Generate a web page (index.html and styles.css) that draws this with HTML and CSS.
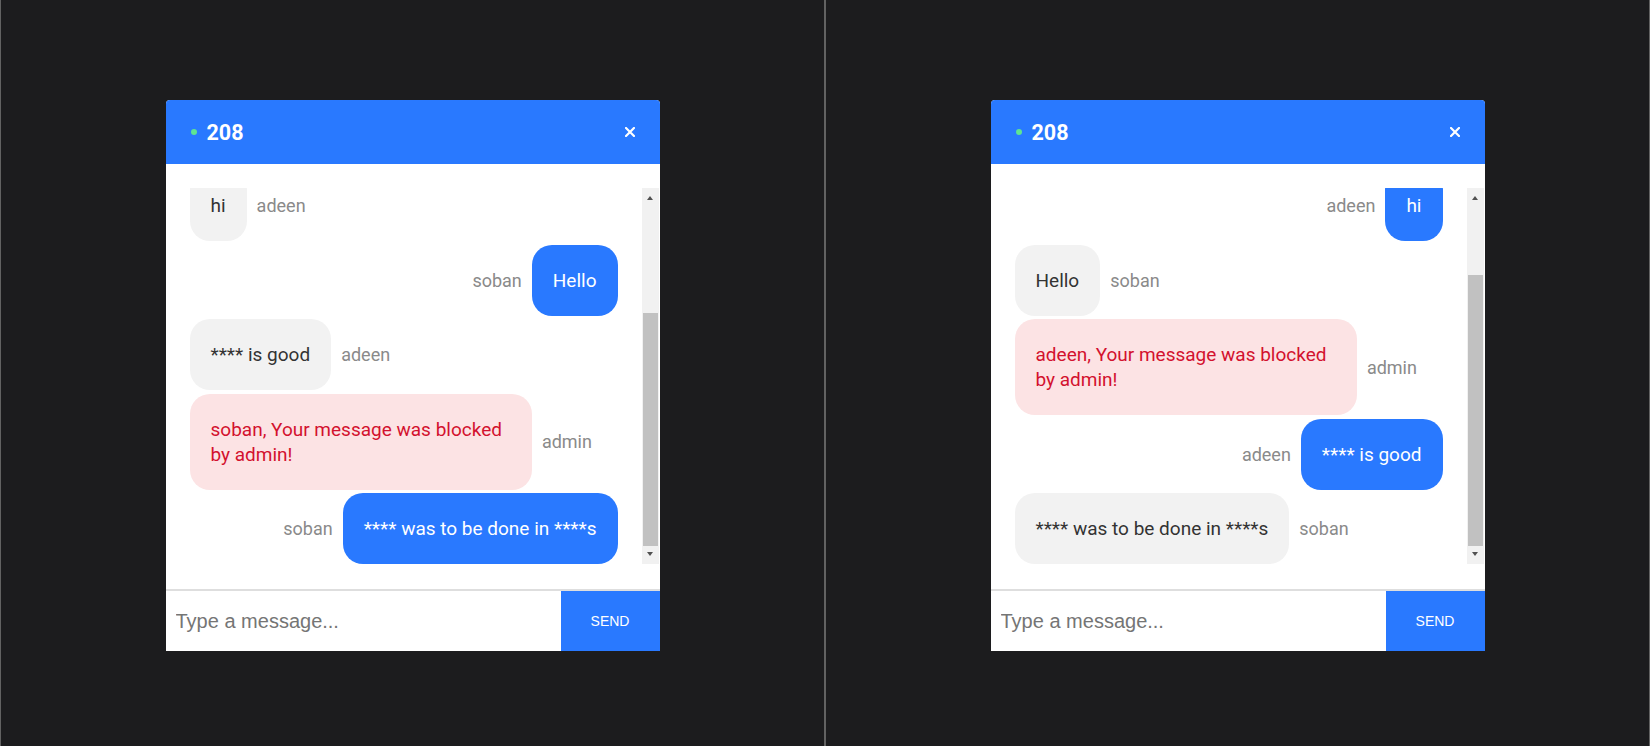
FILE: index.html
```html
<!DOCTYPE html>
<html lang="en">
<head>
<meta charset="utf-8">
<title>Chat 208</title>
<link rel="stylesheet" href="styles.css">
</head>
<body>
<div class="screen">
  <section class="pane">
    <div class="chat">
      <header class="chat-head">
        <span class="status-dot"></span>
        <span class="room">208</span>
        <button class="close" type="button" aria-label="Close">
          <svg width="10" height="10" viewBox="0 0 10 10"><path d="M1 1L9 9M9 1L1 9" stroke="#fff" stroke-width="2.2" stroke-linecap="square"/></svg>
        </button>
      </header>
      <div class="chat-body">
        <div class="messages">
          <div class="row other"><div class="bubble">hi</div><span class="author">adeen</span></div>
          <div class="row mine"><span class="author">soban</span><div class="bubble">Hello</div></div>
          <div class="row other"><div class="bubble">**** is good</div><span class="author">adeen</span></div>
          <div class="row other"><div class="bubble blocked">soban, Your message was blocked by admin!</div><span class="author">admin</span></div>
          <div class="row mine"><span class="author">soban</span><div class="bubble">**** was to be done in ****s</div></div>
        </div>
        <div class="scrollbar">
          <div class="sb-btn"><span class="arrow-up"></span></div>
          <div class="sb-track"><div class="sb-thumb" style="height:233px"></div></div>
          <div class="sb-btn"><span class="arrow-down"></span></div>
        </div>
      </div>
      <form class="composer">
        <input class="composer-input" type="text" placeholder="Type a message..." autofocus>
        <button class="send" type="button">Send</button>
      </form>
    </div>
  </section>
  <section class="pane">
    <div class="chat">
      <header class="chat-head">
        <span class="status-dot"></span>
        <span class="room">208</span>
        <button class="close" type="button" aria-label="Close">
          <svg width="10" height="10" viewBox="0 0 10 10"><path d="M1 1L9 9M9 1L1 9" stroke="#fff" stroke-width="2.2" stroke-linecap="square"/></svg>
        </button>
      </header>
      <div class="chat-body">
        <div class="messages">
          <div class="row mine"><span class="author">adeen</span><div class="bubble">hi</div></div>
          <div class="row other"><div class="bubble">Hello</div><span class="author">soban</span></div>
          <div class="row other"><div class="bubble blocked">adeen, Your message was blocked by admin!</div><span class="author">admin</span></div>
          <div class="row mine"><span class="author">adeen</span><div class="bubble">**** is good</div></div>
          <div class="row other"><div class="bubble">**** was to be done in ****s</div><span class="author">soban</span></div>
        </div>
        <div class="scrollbar">
          <div class="sb-btn"><span class="arrow-up"></span></div>
          <div class="sb-track"><div class="sb-thumb" style="height:271px"></div></div>
          <div class="sb-btn"><span class="arrow-down"></span></div>
        </div>
      </div>
      <form class="composer">
        <input class="composer-input" type="text" placeholder="Type a message...">
        <button class="send" type="button">Send</button>
      </form>
    </div>
  </section>
</div>
</body>
</html>
```
FILE: styles.css
```css
* { box-sizing: border-box; }

html, body {
  margin: 0;
  padding: 0;
  background: #1c1c1e;
}

.screen {
  display: flex;
  width: 1650px;
  height: 746px;
}

.pane {
  width: 825px;
  height: 746px;
  border-left: 1px solid #626262;
  border-right: 1px solid #626262;
  padding-top: 100px;
  display: flex;
  justify-content: center;
  align-items: flex-start;
}

.chat {
  width: 494px;
  height: 551px;
  background: #fff;
  border-radius: 4px 4px 0 0;
  overflow: hidden;
  display: flex;
  flex-direction: column;
  font-family: Roboto, "Liberation Sans", sans-serif;
}

.chat-head {
  height: 64px;
  flex: 0 0 64px;
  background: #2979ff;
  display: flex;
  align-items: center;
  padding: 0 25px 0 25px;
}

.status-dot {
  width: 6px;
  height: 6px;
  border-radius: 50%;
  background: #5ee592;
  margin-right: 10px;
}

.room {
  color: #fff;
  font-weight: 700;
  font-size: 21.5px;
  flex: 1;
}

.close {
  background: none;
  border: 0;
  padding: 0;
  width: 10px;
  height: 10px;
  display: flex;
  cursor: pointer;
}

.chat-body {
  display: flex;
  padding: 24px 1px 25px 24px;
  border-bottom: 2px solid #dedede;
  height: 427px;
  flex: 0 0 427px;
}

.messages {
  flex: 1;
  margin-right: 24px;
  overflow: hidden;
  display: flex;
  flex-direction: column;
  justify-content: flex-end;
  gap: 3.5px;
}

.row {
  display: flex;
  align-items: center;
  gap: 10px;
  flex-shrink: 0;
}

.row.mine { justify-content: flex-end; }

.bubble {
  max-width: 80%;
  padding: 23px 21px;
  border-radius: 20px;
  font-size: 19px;
  line-height: 25px;
  background: #f2f2f2;
  color: #333;
}

.row.mine .bubble {
  background: #2979ff;
  color: #fff;
}

.bubble.blocked {
  background: #fce3e4;
  color: #d3112e;
}

.author {
  font-size: 18px;
  color: #8a8a8a;
  white-space: nowrap;
}

.scrollbar {
  width: 17px;
  flex: 0 0 17px;
  background: #f1f1f1;
  display: flex;
  flex-direction: column;
}

.sb-btn {
  height: 17px;
  flex: 0 0 17px;
  display: flex;
  justify-content: center;
  align-items: center;
}

.arrow-up {
  width: 0;
  height: 0;
  border-left: 3.5px solid transparent;
  border-right: 3.5px solid transparent;
  border-bottom: 4px solid #505050;
  margin-top: 3px;
}

.arrow-down {
  width: 0;
  height: 0;
  border-left: 3.5px solid transparent;
  border-right: 3.5px solid transparent;
  border-top: 4px solid #505050;
  margin-bottom: 3px;
}

.sb-track {
  flex: 1;
  display: flex;
  flex-direction: column;
  justify-content: flex-end;
  padding: 0 1px 1px 1px;
}

.sb-thumb {
  background: #c1c1c1;
}

.composer {
  height: 60px;
  flex: 0 0 60px;
  display: flex;
  margin: 0;
}

.composer-input {
  flex: 1;
  min-width: 0;
  border: 0;
  outline: none;
  padding: 0 10px;
  font-family: "Liberation Sans", Arial, sans-serif;
  font-size: 20px;
  color: #333;
  background: #fff;
}

.composer-input::placeholder { color: #757575; }

.send {
  width: 99px;
  flex: 0 0 99px;
  border: 0;
  background: #2979ff;
  color: #fff;
  font-family: "Liberation Sans", Arial, sans-serif;
  font-size: 14px;
  text-transform: uppercase;
  cursor: pointer;
}
```
